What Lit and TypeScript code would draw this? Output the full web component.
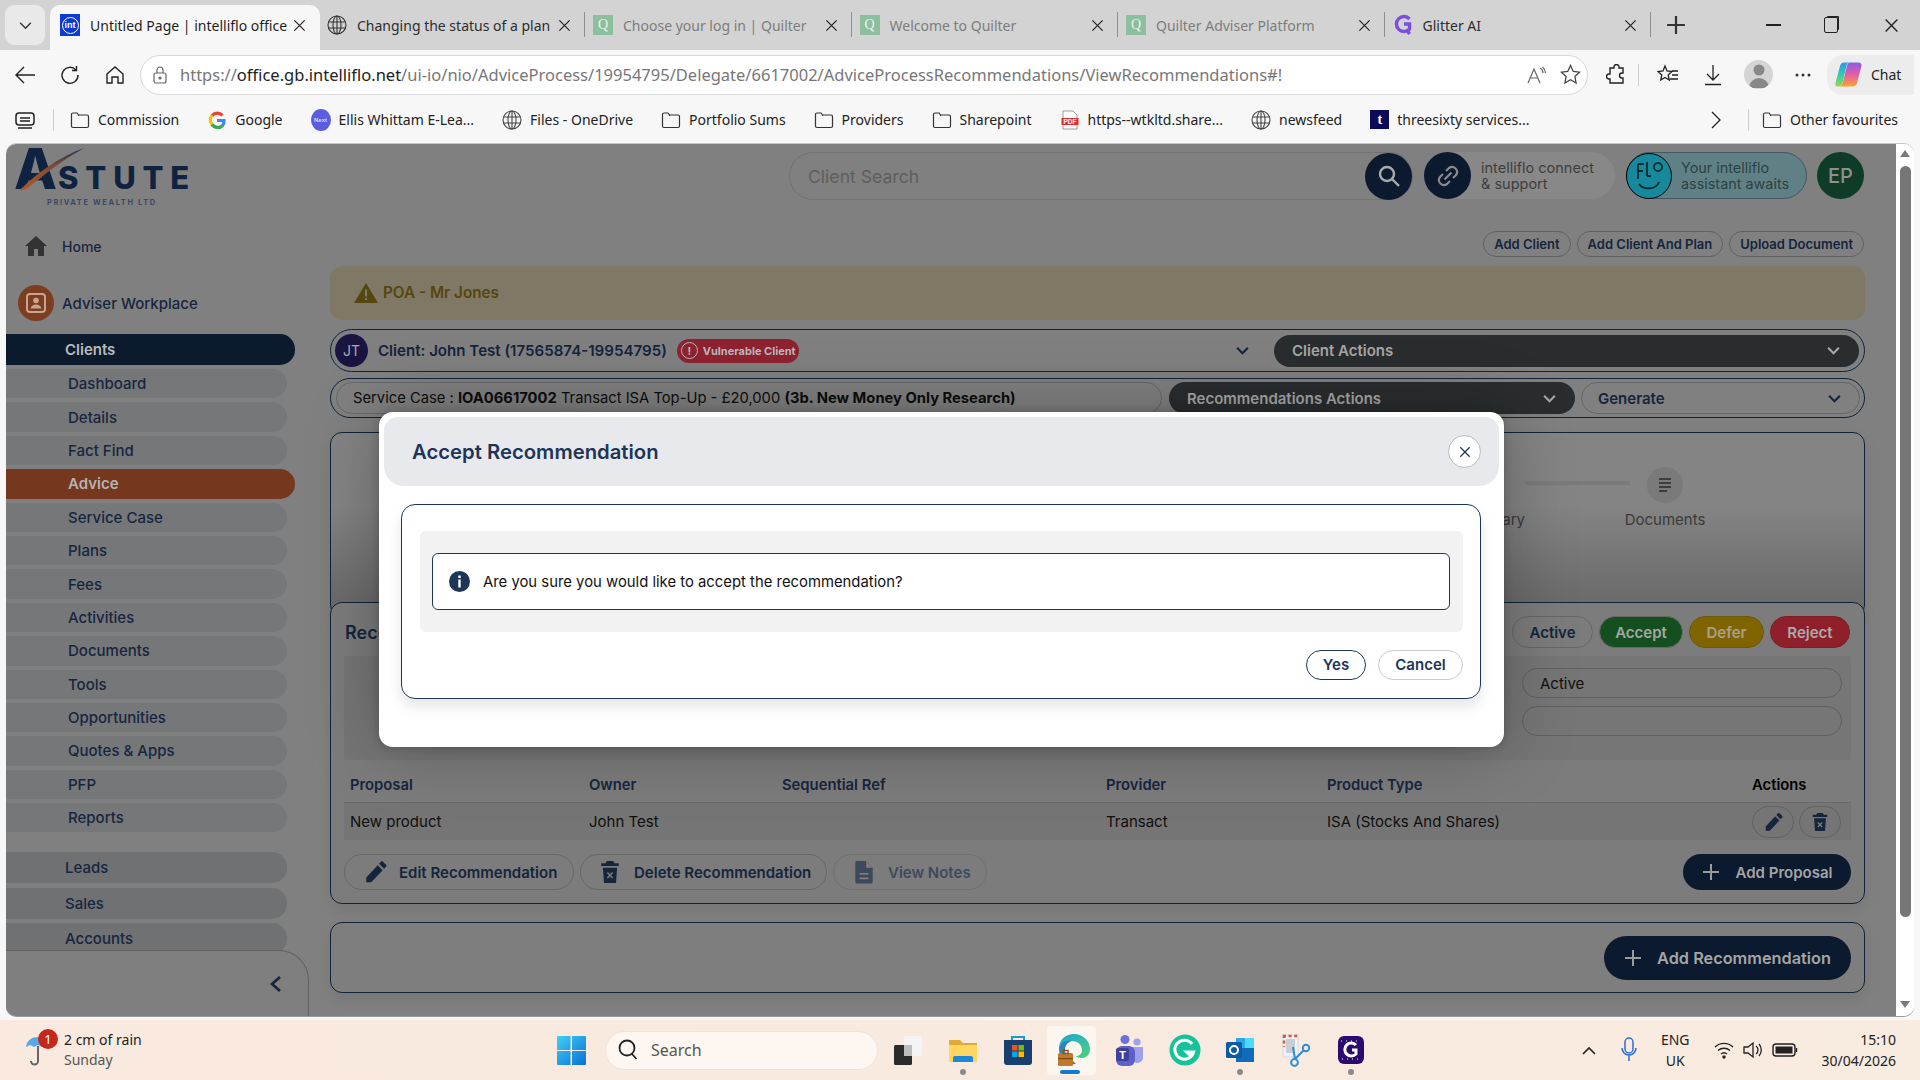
import { LitElement, html, css } from "lit";
import { customElement } from "lit/decorators.js";

const globe = (s = 20, c = "#444") => html`<svg width=${s} height=${s} viewBox="0 0 20 20" fill="none" stroke=${c} stroke-width="1.1"><circle cx="10" cy="10" r="9"/><ellipse cx="10" cy="10" rx="4" ry="9"/><path d="M1.6 7h16.8M1.6 13h16.8M10 1v18"/></svg>`;
const folder = () => html`<svg width="20" height="20" viewBox="0 0 20 20" fill="none" stroke="#333" stroke-width="1.2"><path d="M1.5 4.5a1.5 1.5 0 0 1 1.5-1.5h4l1.6 2H17a1.5 1.5 0 0 1 1.5 1.5V16a1.5 1.5 0 0 1-1.5 1.5H3A1.5 1.5 0 0 1 1.5 16z"/><path d="M8.5 5v1"/></svg>`;
const quilter = () => html`<span class="qfav">Q</span>`;
const x = (s = 14, c = "#222", w = 1.3) => html`<svg width=${s} height=${s} viewBox="0 0 14 14" fill="none" stroke=${c} stroke-width=${w}><path d="M1.5 1.5l11 11M12.5 1.5l-11 11"/></svg>`;
const chev = (s = 14, c = "#14253c", w = 2) => html`<svg width=${s} height=${s} viewBox="0 0 14 14" fill="none" stroke=${c} stroke-width=${w}><path d="M2 4.5l5 5 5-5"/></svg>`;
const pencil = (s = 22, c = "#14253c") => html`<svg width=${s} height=${s} viewBox="0 0 22 22"><path fill=${c} d="M3 16.5V21h4.500L18 9.800 13.500 5.300zM19.300 8.500l1.800-1.900c.5-.5.5-1.200 0-1.700l-2.900-2.900c-.5-.5-1.200-.5-1.700 0l-1.800 1.900z" transform="translate(0 -.5)"/></svg>`;
const trash = (s = 22, c = "#14253c") => html`<svg width=${s} height=${s} viewBox="0 0 22 22"><path fill=${c} d="M8 1h6l1 2h4v2.500H3V3h4zM4.500 7h13l-1 14h-11z"/><path stroke="#7a7a7a" stroke-width="1.500" d="M8.600 11.500l4.800 5M13.400 11.500l-4.800 5"/></svg>`;
const note = (s = 22, c = "#3e4a5c") => html`<svg width=${s} height=${s} viewBox="0 0 22 22"><path fill=${c} d="M4 1h9l6 6v13a1.500 1.500 0 0 1-1.500 1.500h-13A1.500 1.500 0 0 1 3 20V2.500A1.500 1.500 0 0 1 4 1z"/><path fill="#7d7d7d" d="M13 1v6h6zM7 12h8v1.600H7zM7 16h8v1.600H7z"/></svg>`;
const plus = (c = "#9b9b9b", s = 18) => html`<svg width=${s} height=${s} viewBox="0 0 18 18" stroke=${c} stroke-width="2"><path d="M9 1v16M1 9h16"/></svg>`;

const bookmarks: [any, string][] = [
  [folder(), "Commission"],
  [html`<svg width="20" height="20" viewBox="0 0 20 20" fill="none" stroke-width="3.200"><path stroke="#ea4335" d="M15.500 5.500a7 7 0 0 0-10.500 0"/><path stroke="#fbbc05" d="M5.200 5.200a7 7 0 0 0 0 9.400"/><path stroke="#34a853" d="M5 14.500a7 7 0 0 0 10.800 .8"/><path stroke="#4285f4" d="M15.500 15.500a7 7 0 0 0 1.500-5H10"/></svg>`, "Google"],
  [html`<span class="ellis">Next</span>`, "Ellis Whittam E-Lea..."],
  [globe(), "Files - OneDrive"],
  [folder(), "Portfolio Sums"],
  [folder(), "Providers"],
  [folder(), "Sharepoint"],
  [html`<svg width="20" height="20" viewBox="0 0 20 20"><path fill="#fff" stroke="#999" d="M3 1h10l4 4v14H3z"/><rect x="1.500" y="8" width="17" height="7" fill="#e02f2f"/><text x="10" y="14" font-size="6.500" font-weight="700" font-family="Liberation Sans" fill="#fff" text-anchor="middle">PDF</text></svg>`, "https--wtkltd.share..."],
  [globe(), "newsfeed"],
  [html`<span class="tfav">t</span>`, "threesixty services..."],
];

const tabs: [any, string, boolean][] = [
  [globe(20, "#333"), "Changing the status of a plan", false],
  [quilter(), "Choose your log in | Quilter", true],
  [quilter(), "Welcome to Quilter", true],
  [quilter(), "Quilter Adviser Platform", true],
  [html`<svg width="20" height="22" viewBox="0 0 20 22" fill="none" stroke="#7a4fe0" stroke-width="3.400"><path d="M16.500 5A7.500 7.500 0 1 0 16.500 15V10H11"/><path d="M14 16l2.500 4"/></svg>`, "Glitter AI", false],
];

const nav = ["Dashboard", "Details", "Fact Find", "Advice", "Service Case", "Plans", "Fees", "Activities", "Documents", "Tools", "Opportunities", "Quotes & Apps", "PFP", "Reports"];

const taskIcons = [
  html`<svg width="30" height="30" viewBox="0 0 30 30"><rect x="11" y="1" width="18" height="20" rx="1.500" fill="#f4f4f4"/><rect x="1" y="10" width="18" height="20" rx="1.500" fill="#2b2b2b"/><rect x="11" y="10" width="8" height="11" fill="#bdbdbd"/></svg>`,
  html`<svg width="30" height="30" viewBox="0 0 30 30"><path fill="#e2a93a" d="M1 5h11l3 3h14v6H1z"/><path fill="#ffd75e" d="M1 10h28v17H1z"/><path fill="#1e88d8" d="M7 21h16a2 2 0 0 1 2 2v4H5v-4a2 2 0 0 1 2-2z"/></svg>`,
  html`<svg width="30" height="32" viewBox="0 0 30 32"><path fill="none" stroke="#1a9ad6" stroke-width="2" d="M9 7V3h12v4"/><path fill="#1a3f6e" d="M1 6h28v22a3 3 0 0 1-3 3H4a3 3 0 0 1-3-3z"/><rect x="9" y="11" width="5.500" height="5.500" fill="#f25022"/><rect x="15.500" y="11" width="5.500" height="5.500" fill="#7fba00"/><rect x="9" y="17.500" width="5.500" height="5.500" fill="#00a4ef"/><rect x="15.500" y="17.500" width="5.500" height="5.500" fill="#ffb900"/></svg>`,
  html`<svg width="34" height="34" viewBox="0 0 34 34"><defs><linearGradient id="eg" x1="0" y1="0" x2="1" y2="1"><stop offset="0" stop-color="#1aa7d8"/><stop offset="1" stop-color="#4fd07a"/></linearGradient></defs><path fill="url(#eg)" d="M2 14C3 6 9 1 17 1c9 0 16 7 16 15 0 6-4 9-8 9-3 0-5-1-6-2 3 0 6-2 6-6 0-5-4-9-10-9-5 0-10 2-13 6z"/><path fill="#0f6cbd" d="M2 14c3-5 8-7 13-6-4 1-7 4-7 9 0 5 3 9 8 11l3 3c-8 1-18-5-17-17z" opacity=".85"/><rect x="1" y="20" width="15" height="13" rx="1.500" fill="#c0792a"/><rect x="6" y="17.500" width="5" height="3" fill="none" stroke="#8a5418" stroke-width="1.400"/><rect x="1" y="25" width="15" height="1.200" fill="#7a4c14"/></svg>`,
  html`<svg width="30" height="32" viewBox="0 0 30 32"><circle cx="11" cy="5.500" r="4.500" fill="#6d72d8"/><circle cx="23" cy="8" r="3.600" fill="#9ea2ea"/><path fill="#9ea2ea" d="M17 13h12v10a5.500 5.500 0 0 1-11 1z"/><rect x="2" y="12" width="19" height="20" rx="6" fill="#5c60c8"/><rect x="2" y="14" width="13" height="13" rx="2" fill="#3f3f9e"/><text x="8.500" y="24.500" fill="#fff" font-size="11" font-weight="700" font-family="Liberation Sans" text-anchor="middle">T</text></svg>`,
  html`<svg width="32" height="32" viewBox="0 0 32 32"><circle cx="16" cy="16" r="15.500" fill="#15c39a"/><path fill="none" stroke="#fff" stroke-width="3" d="M23 10a9.500 9.500 0 1 0 1.600 8h-7l4.600 4.500"/></svg>`,
  html`<svg width="30" height="30" viewBox="0 0 30 30"><rect x="11" y="3" width="18" height="21" fill="#28a8ea"/><rect x="11" y="13" width="18" height="14" fill="#0f6cbd"/><path fill="#50d9ff" d="M20 3h9v10h-9z"/><rect x="1" y="7" width="16" height="16" rx="1.500" fill="#0a5aa8"/><circle cx="9" cy="15" r="4" fill="none" stroke="#fff" stroke-width="2"/></svg>`,
  html`<svg width="30" height="34" viewBox="0 0 30 34" fill="none"><rect x="3" y="2" width="15" height="22" fill="#eef1f5" stroke="#d5dae0"/><rect x="6" y="6" width="9" height="14" fill="#c8ced6"/><path stroke="#e0503a" stroke-width="2.400" stroke-dasharray="3 2.600" d="M3 3h15M4 2v12"/><path stroke="#2f8fd6" stroke-width="2" d="M13 14l2 12M24 17l-9 9"/><circle cx="14.500" cy="29.500" r="3.400" stroke="#2f8fd6" stroke-width="2"/><circle cx="26" cy="15" r="3.200" stroke="#2f8fd6" stroke-width="2"/></svg>`,
  html`<svg width="28" height="30" viewBox="0 0 28 30"><rect x="1" y="1" width="26" height="28" rx="6" fill="#2a0b6e"/><path fill="none" stroke="#fff" stroke-width="3" d="M19 10a6.500 6.500 0 1 0 0 9v-4h-4"/><path stroke="#fff" stroke-width="1" stroke-dasharray="1 4" d="M4 6h20M5 24h18"/></svg>`,
];

@customElement("app-root")
export class AppRoot extends LitElement {
  static styles = css`
    :host { display: block; width: 1920px; height: 1080px; overflow: hidden; position: relative; background: #f7f7f7; font-family: Inter, "Liberation Sans", sans-serif; color: #14253c; }
    * { box-sizing: border-box; }
    svg { display: block; flex: none; }

    /* Browser chrome */
    .chrome { font-family: "Noto Sans", "Liberation Sans", sans-serif; position: relative; z-index: 2; }
    .tabstrip { height: 50px; background: #d3d3d3; display: flex; align-items: flex-end; padding-left: 5px; }
    .tabmenu { width: 40px; height: 40px; margin: 0 5px 5px 0; background: #e9e9e9; border-radius: 9px; display: grid; place-items: center; flex: none; }
    .tab { flex: none; width: 266.500px; height: 45px; display: flex; align-items: center; padding: 0 0 5px 8px; font-size: 14px; color: #2d2d2d; position: relative; white-space: nowrap; }
    .tab.first { padding-left: 7px; width: 265px; }
    .tab.active { width: 270px; background: #f7f7f7; border-radius: 10px 10px 0 0; padding-left: 10px; color: #1f1f1f; }
    .tab.dim { color: #7d7d7d; }
    .tab .t { margin-left: 10px; flex: 1; }
    .tab .cl { margin-right: 14px; }
    .tab .sep { position: absolute; right: 0; top: 7px; height: 25px; width: 1px; background: #8f8f8f; }
    .qfav { width: 20px; height: 20px; background: #8cbf9d; color: #e9f2ea; font: 400 14px "Liberation Serif", serif; display: grid; place-items: center; flex: none; }
    .intfav { width: 20px; height: 22px; background: #0a3bd2; display: grid; place-items: center; flex: none; }
    .intfav span { width: 17px; height: 17px; border: 1.200px solid #fff; border-radius: 50%; color: #fff; font: 700 9px "Liberation Sans", sans-serif; display: grid; place-items: center; }
    .winctl { flex: 1; height: 45px; display: flex; align-items: center; padding-bottom: 5px; }
    .plus { margin: 0 0 0 15px; }
    .min { margin-left: auto; width: 15px; height: 1.500px; background: #222; }
    .maxb { margin-left: 43px; width: 14px; height: 16px; border: 1.500px solid #222; border-radius: 2px; box-shadow: 2px -2px 0 -1px #222; }
    .clb { margin: 0 21px 0 46px; }

    .toolbar { height: 50px; display: flex; align-items: center; padding: 0 0 1px 14px; }
    .tb { width: 22px; display: grid; place-items: center; margin-right: 23px; flex: none; }
    .url { width: 1448px; margin-left: -9px; height: 40px; background: #fff; border: 1px solid #d8d8d8; border-radius: 20px; display: flex; align-items: center; padding-left: 11px; font-size: 16.500px; color: #777; white-space: nowrap; flex: none; }
    .url b { font-weight: 400; color: #222; }
    .url .u { margin-left: 12px; flex: 1; }
    .url .e { margin-right: 13px; }
    .url .e2 { margin-right: 6px; }
    .tools { display: flex; align-items: center; margin-left: 18px; }
    .tools .sp { width: 1px; height: 22px; background: #ccc; margin: 0 18px 0 11px; }
    .tools .g { width: 24px; }
    .avatar { width: 29px; height: 29px; border-radius: 50%; background: #d4d4d4; overflow: hidden; display: grid; place-items: center; margin: 0 21px 0 21px; }
    .chat { margin-left: 15px; width: 87px; height: 40px; background: #ececec; border-radius: 16px 0 0 16px; display: flex; align-items: center; padding-left: 8px; gap: 9px; font-size: 14px; color: #222; }

    .bmbar { height: 44px; display: flex; align-items: center; padding: 0 0 5px 14px; font-size: 14px; color: #222; white-space: nowrap; }
    .bmsep { width: 1px; height: 22px; background: #ccc; margin: 0 16px 0 17px; }
    .bm { display: flex; align-items: center; gap: 8px; margin-right: 28px; }
    .bm:last-of-type { margin-right: 0; }
    .ellis { width: 20px; height: 22px; border-radius: 50%; background: #5b5ce2; color: #d8d8ff; font: 700 6px "Liberation Sans", sans-serif; display: grid; place-items: center; }
    .tfav { width: 19px; height: 19px; background: #0c0a58; color: #fff; font: 700 14px "Liberation Serif", serif; display: grid; place-items: center; }
    .bmmore { margin-left: auto; display: flex; align-items: center; padding-right: 22px; }
    .bmmore .s2 { width: 1px; height: 22px; background: #ccc; margin: 0 13px 0 27px; }

    /* Page */
    .frame { height: 876px; padding: 0 6px 4px; }
    .page { height: 872px; display: flex; border-radius: 10px; box-shadow: 0 -1px 0 #c8c8c8, 0 1px 0 #999; position: relative; background: #fff; }
    .content { width: 1890px; display: flex; position: relative; background: #808080; border-radius: 10px 0 0 10px; }
    .scroll { width: 18px; background: #fff; display: flex; flex-direction: column; align-items: center; padding: 6px 0 8px; flex: none; border-radius: 0 10px 10px 0; }
    .scroll .thumb { width: 11px; height: 751px; background: #767676; border-radius: 6px; margin-top: 9px; margin-bottom: auto; }
    .arrow { width: 0; height: 0; border: 5px solid transparent; }
    .arrow.up { border-top: 0; border-bottom: 7px solid #7a7a7a; }
    .arrow.down { border-bottom: 0; border-top: 7px solid #7a7a7a; }

    /* Sidebar */
    .side { width: 324px; height: 872px; flex: none; position: relative; font-size: 15px; color: #17263e; }
    .logo { height: 80px; padding: 0 0 0 8px; position: relative; color: #0f2240; white-space: nowrap; }
    .logo .main { display: flex; align-items: flex-end; height: 46px; line-height: 1; }
    .logo .a { font: 800 56px/41px Inter, sans-serif; letter-spacing: 1px; height: 41px; }
    .logo .s { font: 800 31px/24px Inter, sans-serif; letter-spacing: 6.800px; height: 24px; }
    .logo .sub { margin: 9px 0 0 33px; font: 700 7.500px/8px Inter, sans-serif; letter-spacing: 1.600px; color: #3b4a63; }
    .logo svg { position: absolute; left: 8px; top: 0; }
    .home { display: flex; align-items: center; height: 24px; margin-top: 10px; padding-left: 19px; gap: 15px; font-weight: 500; font-size: 14px; }
    .adv { display: flex; align-items: center; height: 36px; margin-top: 27px; padding-left: 12px; gap: 8px; font-weight: 500; }
    .adv .circ { width: 36px; height: 36px; border-radius: 50%; background: #7c3d20; display: grid; place-items: center; }
    .navlist { margin-top: 13px; display: flex; flex-direction: column; }
    .pill { height: 29.400px; width: 281px; background: #757779; border-radius: 0 15px 15px 0; margin-bottom: 4px; display: flex; align-items: center; padding-left: 62px; font-weight: 500; white-space: nowrap; }
    .pill.clients { height: 31px; width: 289px; background: #0b1a2d; color: #b9b9b9; padding-left: 59px; font-weight: 600; margin-bottom: 4px; }
    .pill.sel { width: 289px; background: #75371d; color: #b4b4b4; font-weight: 600; }
    .pill.lead { height: 31px; padding-left: 59px; background: #6f7173; margin-bottom: 4.200px; }
    .gap { height: 16px; }
    .collapse { position: absolute; left: 0; bottom: 0; width: 303px; height: 66px; background: #7f7f7f; border: 1px solid #616161; border-left: 0; border-bottom: 0; border-top-right-radius: 30px; border-bottom-left-radius: 10px; display: flex; justify-content: flex-end; align-items: center; padding-right: 26px; }

    /* Main */
    .main { width: 1535px; flex: none; padding-top: 8px; }
    .head { display: flex; justify-content: flex-end; gap: 11px; height: 48px; padding-right: 1px; }
    .search { width: 624px; height: 48px; border: 1px solid #727272; border-radius: 24px; display: flex; align-items: center; justify-content: space-between; padding-left: 18px; font-size: 17.600px; color: #5e5e5e; }
    .circbtn { width: 47px; height: 47px; border-radius: 50%; background: #0b1a2e; display: grid; place-items: center; flex: none; }
    .connect { width: 191px; height: 47px; background: #888; border-radius: 24px; display: flex; align-items: center; gap: 10px; font-size: 14.500px; line-height: 16px; color: #3e3e3e; }
    .flo { width: 181px; height: 47px; background: #5f8186; border: 1px solid #456; border-radius: 24px; display: flex; align-items: center; gap: 9px; font-size: 14.400px; line-height: 16px; color: #2c4245; margin-right: -1px; }
    .flo .c { width: 46px; height: 46px; border-radius: 50%; background: #16899c; border: 1px solid #000; color: #062c33; display: grid; place-items: center; flex: none; margin-left: -1px; }
    .ep { width: 47px; height: 47px; border-radius: 50%; background: #0f3c28; color: #8f8f8f; font-size: 20px; font-weight: 500; display: grid; place-items: center; }
    .acts { display: flex; justify-content: flex-end; gap: 6px; margin-top: 31px; height: 26px; padding-right: 1px; }
    .btn-s { height: 26px; border: 1px solid #626262; border-radius: 13px; padding: 0 10px; font-size: 13px; font-weight: 600; display: flex; align-items: center; white-space: nowrap; color: #14253c; }
    .poa { height: 54px; margin-top: 9px; background: #7f7864; border-radius: 12px; display: flex; align-items: center; padding: 0 0 1px 24px; gap: 5px; color: #564610; font-size: 15.300px; font-weight: 600; }
    .poa svg { margin-top: 1px; }
    .bar { border: 1px solid #10233a; border-radius: 22px; display: flex; align-items: center; }
    .clientbar { height: 43px; margin-top: 9px; padding: 0 5px 0 4px; }
    .jt { width: 33px; height: 33px; border-radius: 50%; background: #1a1440; color: #aaa; font-size: 14px; display: grid; place-items: center; flex: none; }
    .cname { margin-left: 10px; font-size: 15.100px; font-weight: 600; color: #14253c; white-space: nowrap; }
    .vuln { margin-left: 10px; height: 24px; width: 122px; background: #8f2230; border-radius: 12px; display: flex; align-items: center; gap: 5px; padding-left: 4px; color: #b9b9b9; font-size: 11px; font-weight: 700; white-space: nowrap; }
    .vuln i { width: 17px; height: 17px; border: 1.400px solid #b9b9b9; border-radius: 50%; display: grid; place-items: center; font-style: normal; font-size: 11px; }
    .ch1 { margin-left: auto; margin-right: 24px; }
    .dark { background: #2a2d2f; color: #a6a6a6; font-size: 15px; font-weight: 600; display: flex; align-items: center; justify-content: space-between; padding: 0 18px; border-radius: 16px; height: 32px; white-space: nowrap; }
    .dark.ca { width: 585px; }
    .dark.ra { width: 406px; margin-left: 7px; }
    .case { height: 40px; margin-top: 6px; padding: 3px 3px 0 5px; border-color: #10233a; align-items: flex-start; }
    .inner { width: 826px; height: 32px; border: 1px solid #686868; border-radius: 16px; display: flex; align-items: center; padding-left: 16px; font-size: 14.750px; color: #0d0d0d; white-space: nowrap; }
    .inner b { font-weight: 700; }
    .gen { width: 279px; height: 32px; margin-left: 6px; border: 1px solid #666; border-radius: 16px; display: flex; align-items: center; justify-content: space-between; padding: 0 17px 0 16px; font-size: 15px; font-weight: 600; color: #14253c; }

    .panel { border: 1px solid #10233a; border-radius: 12px; box-shadow: 0 6px 14px rgba(0,0,0,.08); }
    .p1 { margin-top: 14px; height: 185px; margin-bottom: -15px; background: linear-gradient(#848484 40%, #6c6c6c 88%); padding: 34px 164px 0 0; display: flex; justify-content: flex-end; }
    .step { width: 70px; display: flex; flex-direction: column; align-items: center; font-size: 15px; color: #3a3a3a; white-space: nowrap; }
    .step .dot { width: 36px; height: 36px; border-radius: 50%; background: #7a7a7a; display: grid; place-items: center; margin-bottom: 7px; }
    .step.sum { width: 80px; align-items: flex-end; padding-top: 43px; }
    .line { width: 105px; height: 4px; background: #7b7b7b; margin-top: 14px; }
    .p2 { position: relative; height: 302px; background: #7c7c7c; padding: 13px 13px 0; }
    .statusrow { height: 32px; display: flex; align-items: center; justify-content: flex-end; gap: 6px; position: relative; padding-right: 1px; }
    .statusrow .title { margin-right: auto; font-size: 18px; font-weight: 600; color: #14253c; margin-left: 1px; }
    .statusrow .lab { font-size: 15px; font-weight: 600; color: #111; }
    .st { height: 32px; border-radius: 16px; display: grid; place-items: center; font-size: 15px; font-weight: 600; border: 1px solid #686868; color: #14253c; }
    .st.a { width: 81px; margin-left: 2px; }
    .st.ac { width: 84px; background: #14501f; color: #a6a6a6; }
    .st.d { width: 75px; background: #806400; color: #a8a08c; border-color: #6a5a10; }
    .st.r { width: 80px; background: #8f1f2b; color: #aaa; border-color: #7d1f28; }
    .form { height: 104px; margin-top: 8px; background: #767676; padding: 12px 9px 0 0; display: flex; flex-direction: column; align-items: flex-end; gap: 8px; border-radius: 3px; }
    .fld { width: 320px; height: 30px; border: 1px solid #5f5f5f; border-radius: 15px; padding-left: 17px; display: flex; align-items: center; font-size: 15px; color: #111; }
    .thead, .trow { display: grid; grid-template-columns: 239px 193px 324px 221px 425px 99px; padding-left: 6px; align-items: center; }
    .thead { height: 42px; padding-top: 7px; font-size: 14.800px; font-weight: 600; color: #16263e; white-space: nowrap; }
    .thead span:last-child { color: #000; }
    .trow { height: 38px; background: #757575; border-top: 1px solid #6a6a6a; font-size: 15px; color: #0f0f0f; white-space: nowrap; }
    .rowacts { display: flex; gap: 5px; }
    .ib { width: 42px; height: 32px; border: 1px solid #626262; border-radius: 16px; display: grid; place-items: center; }
    .btnrow { display: flex; gap: 6px; margin-top: 14px; height: 36px; }
    .bt { height: 36px; border: 1px solid #666; border-radius: 18px; display: flex; align-items: center; gap: 12px; padding-left: 18px; font-size: 15px; font-weight: 600; white-space: nowrap; }
    .bt.e { width: 230px; }
    .bt.del { width: 247px; padding-left: 17px; gap: 12px; }
    .bt.v { width: 154px; border-color: #707070; color: #3e4a5c; gap: 12px; }
    .prim { background: #0b1a2e; color: #a5a5a5; border-radius: 18px; display: flex; align-items: center; justify-content: center; gap: 16px; font-size: 15px; font-weight: 600; white-space: nowrap; margin-left: auto; }
    .prim.ap { width: 168px; height: 36px; }
    .p3 { margin-top: 18px; height: 71px; background: #7e7e7e; padding: 13px 13px 0 0; display: flex; }
    .prim.ar { width: 247px; height: 44px; border-radius: 22px; font-size: 16.300px; gap: 15px; }

    /* Modal */
    .modal { position: absolute; left: 373px; top: 268px; width: 1125px; height: 335px; background: #fff; border-radius: 14px; padding: 5px; box-shadow: 0 0 70px rgba(0,0,0,.28), 0 0 10px rgba(0,0,0,.2); }
    .mhead { height: 69px; background: #e8e9ed; border-radius: 14px 14px 20px 20px; display: flex; align-items: center; justify-content: space-between; padding: 0 18px 0 28px; }
    .mhead h2 { margin: 0; font-size: 20.300px; font-weight: 600; color: #1d3557; }
    .mclose { width: 33px; height: 33px; border-radius: 50%; background: #fff; border: 1px solid #b9bcc2; display: grid; place-items: center; }
    .mcard { margin: 18px 18px 0 17px; height: 195px; border: 1px solid #1d3557; border-radius: 14px; padding: 26px 17px 0 18px; box-shadow: 0 8px 14px rgba(0,0,0,.1); }
    .gbox { height: 101px; background: #f2f2f3; border-radius: 6px; padding: 22px 13px 0 12px; }
    .alert { height: 57px; background: #fff; border: 1px solid #1d3557; border-radius: 6px; display: flex; align-items: center; padding-left: 16px; gap: 13px; font-size: 14.850px; color: #111; }
    .mfoot { display: flex; justify-content: flex-end; gap: 12px; margin-top: 18px; }
    .mb { height: 30px; border-radius: 15px; background: #fff; display: grid; place-items: center; font-size: 15px; font-weight: 600; color: #1d3557; padding-bottom: 1px; }
    .mb.y { width: 60px; border: 1.500px solid #1d3557; }
    .mb.c { width: 85px; border: 1.500px solid #c8cacc; }

    /* Taskbar */
    .taskbar { height: 60px; background: linear-gradient(90deg, #f9e9de, #f8ebe0); display: flex; align-items: center; font-family: "Noto Sans", "Liberation Sans", sans-serif; font-size: 14px; color: #222; position: relative; }
    .weather { width: 557px; flex: none; display: flex; align-items: center; padding-left: 25px; position: relative; }
    .weather .txt { margin-left: 13px; line-height: 20px; margin-top: -1px; }
    .weather small { font-size: 14px; color: #555; display: block; }
    .badge { position: absolute; left: 38px; top: -2px; width: 20px; height: 20px; border-radius: 50%; background: #c4281c; color: #fff; font-size: 13px; display: grid; place-items: center; }
    .tsearch { width: 273px; height: 39px; margin-left: 19px; background: #fdf6f1; border: 1px solid #eee3da; border-radius: 20px; display: flex; align-items: center; padding-left: 12px; gap: 13px; font-size: 16px; color: #555; }
    .slots { display: flex; margin-left: 2px; flex: none; }
    .slot { width: 55.400px; height: 60px; display: grid; place-items: center; position: relative; }
    .slot.act::before { content: ""; position: absolute; left: 1px; top: 6px; right: 6px; bottom: 5px; background: rgba(255,255,255,.55); border-radius: 4px; }
    .slot.act svg { position: relative; }
    .slot.act::after { content: ""; position: absolute; left: 14px; width: 20px; height: 4px; bottom: 6px; background: #0f7bd8; border-radius: 2px; }
    .slot.dot::after { content: ""; position: absolute; left: calc(50% - 3px); bottom: 5px; width: 6px; height: 6px; border-radius: 50%; background: #8a8a8a; }
    .tray { margin-left: auto; display: flex; align-items: center; padding-right: 24px; }
    .lang { margin: 0 24px; text-align: center; line-height: 21px; }
    .clock { margin-left: 24px; text-align: right; line-height: 21px; white-space: nowrap; }
    .trayic { margin-left: 9px; }
    .trayic.mic { margin-left: 25px; }
  `;

  render() {
    return html`
      <div class="chrome">
        <div class="tabstrip">
          <div class="tabmenu">${chev(15, "#333", 1.3)}</div>
          <div class="tab active">
            <span class="intfav"><span>int</span></span>
            <span class="t">Untitled Page | intelliflo office</span>
            <span class="cl">${x(13)}</span>
          </div>
          ${tabs.map(([ic, t, d], i) => html`
            <div class="tab ${d ? "dim" : ""} ${i === 0 ? "first" : ""}">
              ${ic}<span class="t">${t}</span>
              <span class="cl">${x(13)}</span>
              <span class="sep"></span>
            </div>`)}
          <div class="winctl">
            <span class="plus">${plus("#333", 20)}</span>
            <span class="min"></span>
            <span class="maxb"></span>
            <span class="clb">${x(15)}</span>
          </div>
        </div>
        <div class="toolbar">
          <span class="tb"><svg width="22" height="20" viewBox="0 0 22 20" fill="none" stroke="#222" stroke-width="1.400"><path d="M10 2L2 10l8 8M2 10h19"/></svg></span>
          <span class="tb"><svg width="20" height="20" viewBox="0 0 20 20" fill="none" stroke="#222" stroke-width="1.400"><path d="M16 5a8 8 0 1 0 2 5"/><path d="M16.500 1v4.500H12"/></svg></span>
          <span class="tb"><svg width="20" height="20" viewBox="0 0 20 20" fill="none" stroke="#222" stroke-width="1.400"><path d="M2 9l8-7 8 7v9h-5v-6H7v6H2z"/></svg></span>
          <div class="url">
            <svg width="16" height="18" viewBox="0 0 16 18" fill="none" stroke="#666" stroke-width="1.200"><rect x="2" y="7" width="12" height="10" rx="2"/><path d="M5 7V4a3 3 0 0 1 6 0v3"/><circle cx="8" cy="12" r="1" fill="#666"/></svg>
            <span class="u">https://<b>office.gb.intelliflo.net</b>/ui-io/nio/AdviceProcess/19954795/Delegate/6617002/AdviceProcessRecommendations/ViewRecommendations#!</span>
            <span class="e"><svg width="20" height="20" viewBox="0 0 20 20" fill="none" stroke="#666" stroke-width="1.200"><path d="M1 18L7 4l6 14M3.500 13h7M13 3a6 6 0 0 1 3 5M15.500 2a8 8 0 0 1 3 6"/></svg></span>
            <span class="e2"><svg width="21" height="21" viewBox="0 0 21 21" fill="none" stroke="#444" stroke-width="1.300"><path d="M10.500 1.500l2.800 6 6.200.7-4.600 4.300 1.200 6.500-5.600-3.200-5.600 3.200 1.200-6.500L1.500 8.200l6.200-.7z"/></svg></span>
          </div>
          <div class="tools">
            <svg width="21" height="22" viewBox="0 0 21 22" fill="none" stroke="#222" stroke-width="1.400"><path d="M8 3a2.500 2.500 0 0 1 5 0v1h4v5h-1a2.500 2.500 0 0 0 0 5h1v5H4v-4H3a2.500 2.500 0 0 1 0-5h1V4h4z"/></svg>
            <span class="sp"></span>
            <svg width="22" height="22" viewBox="0 0 22 22" fill="none" stroke="#222" stroke-width="1.300"><path d="M8 2l2 5 5 .5-3.800 3.500 1 5L8 13.500 3.800 16l1-5L1 7.500 6 7z"/><path d="M15 7h6M15 11h6M13 15h8"/></svg>
            <span class="g"></span>
            <svg width="20" height="22" viewBox="0 0 20 22" fill="none" stroke="#222" stroke-width="1.300"><path d="M10 1v15M4 10l6 6 6-6M2 20.500h16"/></svg>
            <span class="avatar"><svg width="24" height="27" viewBox="0 0 24 27" fill="#888"><circle cx="12" cy="9" r="5.500"/><path d="M2 27a10 10 0 0 1 20 0z"/></svg></span>
            <svg width="18" height="6" viewBox="0 0 18 6" fill="#333"><circle cx="3" cy="3" r="1.500"/><circle cx="9" cy="3" r="1.500"/><circle cx="15" cy="3" r="1.500"/></svg>
            <span class="chat">
              <svg width="27" height="27" viewBox="0 0 27 27"><defs><linearGradient id="cp" x1="0" y1="0" x2="0" y2="1"><stop offset="0" stop-color="#1f9cf0"/><stop offset=".6" stop-color="#3ed1a0"/><stop offset="1" stop-color="#9bd64a"/></linearGradient><linearGradient id="cp2" x1="0" y1="0" x2="0" y2="1"><stop offset="0" stop-color="#8b5ce8"/><stop offset=".5" stop-color="#e55ca8"/><stop offset="1" stop-color="#f7a62c"/></linearGradient></defs><path fill="url(#cp)" d="M9 1.500h6c-2 0-3 1-3.500 3L8 20c-.6 3-2.500 5.500-5.500 5.500C.8 25.500 0 24 .5 22L5 5c.6-2.300 2-3.500 4-3.500z"/><path fill="url(#cp2)" d="M12 4.500c.5-2 1.800-3 3.500-3h8c2 0 3.500 1.500 3 3.500L22 22c-.6 2.500-2.200 3.500-4.500 3.500H3c3 0 4.600-2.500 5-4.500z"/></svg>
              Chat
            </span>
          </div>
        </div>
        <div class="bmbar">
          <svg width="22" height="20" viewBox="0 0 22 20" fill="none" stroke="#222" stroke-width="1.500"><rect x="2" y="3" width="18" height="12" rx="3"/><path d="M6 8h10M6 11h10M4 18h14"/></svg>
          <span class="bmsep"></span>
          ${bookmarks.map(([ic, t]) => html`<span class="bm">${ic}<span>${t}</span></span>`)}
          <span class="bmmore">
            <svg width="11" height="18" viewBox="0 0 11 18" fill="none" stroke="#222" stroke-width="1.300"><path d="M2 1l8 8-8 8"/></svg>
            <span class="s2"></span>
            <span class="bm">${folder()}<span>Other favourites</span></span>
          </span>
        </div>
      </div>

      <div class="frame">
        <div class="page">
          <div class="content">
            <aside class="side">
              <div class="logo">
                <div class="main"><span class="a">A</span><span class="s">STUTE</span></div>
                <div class="sub">PRIVATE WEALTH LTD</div>
                <svg width="80" height="50" viewBox="0 0 80 50"><defs><linearGradient id="sw" x1="0" y1="1" x2="1" y2="0"><stop offset="0" stop-color="#b5571f"/><stop offset=".55" stop-color="#7a4b3a"/><stop offset="1" stop-color="#1c2f4d"/></linearGradient></defs><path fill="#808080" d="M6 46C24 28 46 15 70 5 48 17 28 30 14 46z" opacity=".95"/><path fill="url(#sw)" d="M6 47C24 27 46 13 70 4 48 16 30 31 12 45z"/></svg>
              </div>
              <div class="home">
                <svg width="22" height="20" viewBox="0 0 22 20"><path fill="#333" d="M11 0L0 10h3v10h6v-7h4v7h6V10h3z"/></svg>
                <span>Home</span>
              </div>
              <div class="adv">
                <span class="circ"><svg width="20" height="20" viewBox="0 0 20 20" fill="none"><rect x="1" y="1" width="18" height="18" rx="3" stroke="#c8a590" stroke-width="2"/><circle cx="10" cy="7.500" r="2.800" fill="#c8a590"/><path fill="#c8a590" d="M4.500 15.500c1-3 3-4 5.500-4s4.500 1 5.500 4z"/></svg></span>
                <span>Adviser Workplace</span>
              </div>
              <div class="navlist">
                <div class="pill clients">Clients</div>
                ${nav.map((n) => html`<div class="pill ${n === "Advice" ? "sel" : ""}">${n}</div>`)}
                <div class="gap"></div>
                ${["Leads", "Sales", "Accounts"].map((n) => html`<div class="pill lead">${n}</div>`)}
              </div>
              <div class="collapse"><svg width="13" height="18" viewBox="0 0 13 18" fill="none" stroke="#14253c" stroke-width="2.600"><path d="M11 2L3 9l8 7"/></svg></div>
            </aside>

            <main class="main">
              <div class="head">
                <div class="search">
                  <span>Client Search</span>
                  <span class="circbtn"><svg width="24" height="24" viewBox="0 0 24 24" fill="none" stroke="#aaa" stroke-width="2.400"><circle cx="10" cy="10" r="7"/><path d="M15 15l7 7"/></svg></span>
                </div>
                <div class="connect">
                  <span class="circbtn"><svg width="26" height="26" viewBox="0 0 26 26" fill="none" stroke="#8a8a8a" stroke-width="2.200"><path d="M11 8l3-3a5 5 0 0 1 7 7l-3 3M15 18l-3 3a5 5 0 0 1-7-7l3-3M9.500 16.500l7-7"/></svg></span>
                  <span>intelliflo connect<br />&amp; support</span>
                </div>
                <div class="flo">
                  <span class="c"><svg width="40" height="40" viewBox="0 0 40 40" fill="none" stroke="#062c33" stroke-width="1.800"><path d="M9 8v15M9 8h6M9 15h5M18 6v14M18 20h4" /><circle cx="29" cy="11" r="4"/><path d="M10 28a11 9 0 0 0 20-2"/></svg></span>
                  <span>Your intelliflo<br />assistant awaits</span>
                </div>
                <div class="ep">EP</div>
              </div>
              <div class="acts">
                <span class="btn-s">Add Client</span>
                <span class="btn-s">Add Client And Plan</span>
                <span class="btn-s">Upload Document</span>
              </div>
              <div class="poa">
                <svg width="24" height="20" viewBox="0 0 24 20"><path fill="#564610" d="M12 0l12 20H0z"/><path fill="#7f7864" d="M11 6.500h2v7h-2zM11 15h2v2h-2z"/></svg>
                POA - Mr Jones
              </div>
              <div class="bar clientbar">
                <span class="jt">JT</span>
                <span class="cname">Client: John Test (17565874-19954795)</span>
                <span class="vuln"><i>!</i>Vulnerable Client</span>
                <span class="ch1">${chev(15)}</span>
                <div class="dark ca">Client Actions ${chev(15, "#a6a6a6")}</div>
              </div>
              <div class="bar case">
                <div class="inner"><span>Service Case : <b>IOA06617002</b> Transact ISA Top-Up - £20,000 <b>(3b. New Money Only Research)</b></span></div>
                <div class="dark ra">Recommendations Actions ${chev(15, "#a6a6a6")}</div>
                <div class="gen">Generate ${chev(15)}</div>
              </div>
              <section class="panel p1">
                <div class="step sum"><span>Summary</span></div>
                <div class="line"></div>
                <div class="step">
                  <span class="dot"><svg width="14" height="16" viewBox="0 0 14 16" stroke="#2a2a2a" stroke-width="1.300"><path d="M1 2h12M1 6h12M1 10h12M1 14h8"/></svg></span>
                  <span>Documents</span>
                </div>
              </section>
              <section class="panel p2">
                <div class="statusrow">
                  <span class="title">Recommendation</span>
                  <span class="lab">Status:</span>
                  <span class="st a">Active</span>
                  <span class="st ac">Accept</span>
                  <span class="st d">Defer</span>
                  <span class="st r">Reject</span>
                </div>
                <div class="form">
                  <div class="fld">Active</div>
                  <div class="fld"></div>
                </div>
                <div class="thead"><span>Proposal</span><span>Owner</span><span>Sequential Ref</span><span>Provider</span><span>Product Type</span><span>Actions</span></div>
                <div class="trow">
                  <span>New product</span><span>John Test</span><span></span><span>Transact</span><span>ISA (Stocks And Shares)</span>
                  <span class="rowacts"><span class="ib">${pencil(20)}</span><span class="ib">${trash(20)}</span></span>
                </div>
                <div class="btnrow">
                  <span class="bt e">${pencil(24)}Edit Recommendation</span>
                  <span class="bt del">${trash(24)}Delete Recommendation</span>
                  <span class="bt v">${note(24)}View Notes</span>
                  <span class="prim ap">${plus()}Add Proposal</span>
                </div>
              </section>
              <section class="panel p3">
                <span class="prim ar">${plus()}Add Recommendation</span>
              </section>
            </main>

            <div class="modal">
              <div class="mhead">
                <h2>Accept Recommendation</h2>
                <span class="mclose">${x(12, "#1d3557", 1.4)}</span>
              </div>
              <div class="mcard">
                <div class="gbox">
                  <div class="alert">
                    <svg width="21" height="21" viewBox="0 0 21 21"><circle cx="10.500" cy="10.500" r="10.500" fill="#1d3557"/><path fill="#fff" d="M9.300 8.500h2.400v8H9.300zM9.300 4.500h2.400v2.400H9.300z"/></svg>
                    <span>Are you sure you would like to accept the recommendation?</span>
                  </div>
                </div>
                <div class="mfoot">
                  <span class="mb y">Yes</span>
                  <span class="mb c">Cancel</span>
                </div>
              </div>
            </div>
          </div>
          <div class="scroll">
            <span class="arrow up"></span>
            <span class="thumb"></span>
            <span class="arrow down"></span>
          </div>
        </div>
      </div>

      <div class="taskbar">
        <div class="weather">
          <svg width="26" height="36" viewBox="0 0 26 36"><path fill="#5aa7e8" d="M1 15C2 8 7 5 13 5s11 3 12 10l-4-2-4 2-4-2-4 2-4-2z"/><path fill="none" stroke="#666" stroke-width="2" d="M13 14v15a3.500 3.500 0 0 1-7 0"/></svg>
          <span class="badge">1</span>
          <span class="txt">2 cm of rain<small>Sunday</small></span>
        </div>
        <svg width="29" height="29" viewBox="0 0 29 29"><defs><linearGradient id="wn" x1="0" y1="0" x2="1" y2="1"><stop offset="0" stop-color="#3fd0f5"/><stop offset="1" stop-color="#0b6fd6"/></linearGradient></defs><path fill="url(#wn)" d="M0 1a1 1 0 0 1 1-1h12.500v14H0zM15 0h13a1 1 0 0 1 1 1v13H15zM0 15h13.500v14H1a1 1 0 0 1-1-1zM15 15h14v13a1 1 0 0 1-1 1H15z"/></svg>
        <div class="tsearch">
          <svg width="20" height="22" viewBox="0 0 20 22" fill="none" stroke="#222" stroke-width="1.800"><circle cx="9" cy="9" r="7.500"/><path d="M14 15l4.500 5"/></svg>
          Search
        </div>
        <div class="slots">
          ${taskIcons.map((ic, i) => html`<span class="slot ${i === 3 ? "act" : ""} ${[1, 6, 8].includes(i) ? "dot" : ""}">${ic}</span>`)}
        </div>
        <div class="tray">
          <svg width="14" height="9" viewBox="0 0 14 9" fill="none" stroke="#222" stroke-width="1.600"><path d="M1 8l6-6 6 6"/></svg>
          <span class="trayic mic"><svg width="16" height="26" viewBox="0 0 16 26" fill="none" stroke="#2a6fd0" stroke-width="1.500"><rect x="4" y="1" width="8" height="15" rx="4"/><path d="M1 11a7 7 0 0 0 14 0M8 18v6"/></svg></span>
          <span class="lang">ENG<br />UK</span>
          <svg width="20" height="18" viewBox="0 0 20 18" fill="none" stroke="#222" stroke-width="1.400"><path d="M1 6a13 13 0 0 1 18 0M4 9.500a9 9 0 0 1 12 0M7 13a4.500 4.500 0 0 1 6 0"/><circle cx="10" cy="16" r="1" fill="#222"/></svg>
          <span class="trayic"><svg width="20" height="18" viewBox="0 0 20 18" fill="none" stroke="#222" stroke-width="1.300"><path d="M1 6h4l5-4v14l-5-4H1zM13 5a5 5 0 0 1 0 8M16 3a9 9 0 0 1 0 12"/></svg></span>
          <span class="trayic"><svg width="26" height="14" viewBox="0 0 26 14" fill="none" stroke="#222" stroke-width="1.400"><rect x="1" y="1" width="22" height="12" rx="3"/><rect x="3.500" y="3.500" width="17" height="7" fill="#222" stroke="none"/><path d="M24.500 5v4"/></svg></span>
          <span class="clock">15:10<br />30/04/2026</span>
        </div>
      </div>
    `;
  }
}
